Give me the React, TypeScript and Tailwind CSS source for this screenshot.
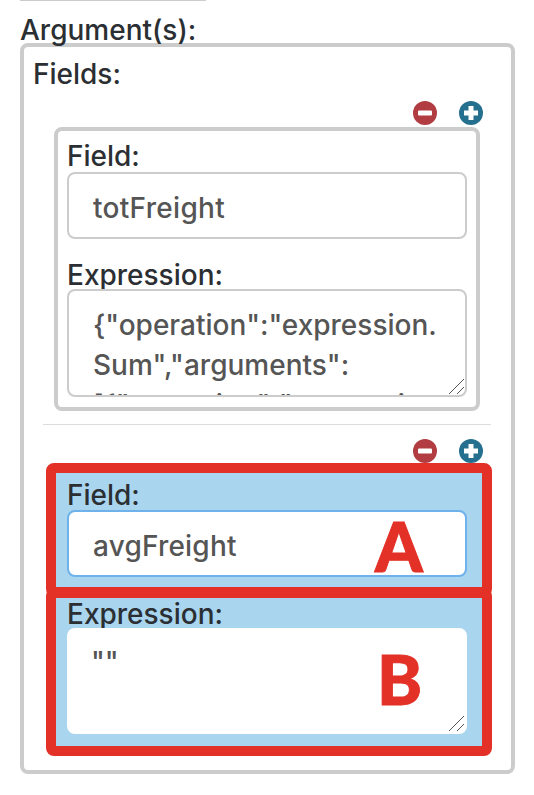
import React from 'react';

const inputClass =
  'block w-full resize-none rounded-lg bg-white pl-6 pr-3 text-[28px] font-medium text-[#555] outline-none';

const labelClass = 'h-[28px] text-[28px] font-medium leading-[28px] text-[#2b2f33]';

const ActionIcons = () => (
  <div className="flex h-6 justify-end gap-[22px] pr-[28px]">
    <svg width="24" height="24" viewBox="0 0 24 24">
      <circle cx="12" cy="12" r="12" fill="#b13c41" />
      <rect x="5" y="9.5" width="14" height="5" rx="1" fill="#fff" />
    </svg>
    <svg width="24" height="24" viewBox="0 0 24 24">
      <circle cx="12" cy="12" r="12" fill="#25708f" />
      <path d="M9.5 5h5v4.5H19v5h-4.5V19h-5v-4.5H5v-5h4.5z" fill="#fff" />
    </svg>
  </div>
);

const Grip = () => (
  <svg
    className="absolute bottom-[3px] right-[3px]"
    width="15"
    height="15"
    viewBox="0 0 15 15"
    stroke="#555"
    strokeWidth="1"
  >
    <path d="M0 15 15 0M8 15l7-7" />
  </svg>
);

const App: React.FC = () => {
  return (
    <div
      className="h-[795px] w-[534px] overflow-hidden bg-white pl-5"
      style={{ fontFamily: 'Inter, sans-serif' }}
    >
      <div className="h-px w-[186px] bg-[#ccc]" />
      <div className={`mt-[15px] !h-[27px] ${labelClass}`}>Argument(s):</div>

      <div className="h-[731px] w-[495px] rounded-lg border-4 border-[#ccc] pl-[9px]">
        <div className={`mt-[13px] ${labelClass}`}>Fields:</div>

        <div className="mt-[13px]">
          <ActionIcons />
        </div>

        <div className="ml-[21px] mt-[2px] h-[284px] w-[426px] rounded-lg border-4 border-[#ccc] px-[9px] pt-[11px]">
          <div className={labelClass}>Field:</div>
          <input
            readOnly
            value="totFreight"
            className={`${inputClass} mt-[2px] h-[67px] border-2 border-[#ccc] pt-[4px] tracking-[0.3px]`}
          />
          <div className={`mt-[22px] ${labelClass}`}>Expression:</div>
          <div className="relative">
            <textarea
              readOnly
              value={'{"operation":"expression.\nSum","arguments":\n[{"operation":"expression'}
              className={`${inputClass} h-[108px] overflow-hidden whitespace-pre border-2 border-[#ccc] pt-[14px] leading-[40px]`}
            />
            <Grip />
          </div>
        </div>

        <div className="ml-[10px] mt-[13px] h-px w-[448px] bg-[#ddd]" />

        <div className="mt-[14px]">
          <ActionIcons />
        </div>

        <div className="relative ml-[13px] w-[446px]">
          <div className="h-[134px] rounded-lg border-[10px] border-[#e33127] bg-[#a9d5ee] pl-[11px] pr-[15px] pt-[8px]">
            <div className={labelClass}>Field:</div>
            <input
              readOnly
              value="avgFreight"
              className={`${inputClass} mt-[1px] h-[67px] border-2 border-[#6fb1ea] pt-[4px] tracking-[0.2px]`}
            />
          </div>
          <div className="-mt-[9px] h-[168px] rounded-lg border-[10px] border-[#e33127] bg-[#a9d5ee] pl-[11px] pr-[15px] pt-[2px]">
            <div className={labelClass}>Expression:</div>
            <div className="relative">
              <textarea
                readOnly
                value={'""'}
                className={`${inputClass} h-[106px] overflow-hidden pt-[14px] leading-[40px]`}
              />
              <Grip />
            </div>
          </div>
          <span
            className="absolute left-[329px] top-[49px] text-[68px] font-black leading-[68px] text-[#e33127] [-webkit-text-stroke:1px_#e33127]"
            style={{ fontFamily: 'Lato, sans-serif' }}
          >
            A
          </span>
          <span
            className="absolute left-[331px] top-[182px] text-[68px] font-black leading-[68px] text-[#e33127] [-webkit-text-stroke:1px_#e33127]"
            style={{ fontFamily: 'Lato, sans-serif' }}
          >
            B
          </span>
        </div>
      </div>
    </div>
  );
};

export default App;
